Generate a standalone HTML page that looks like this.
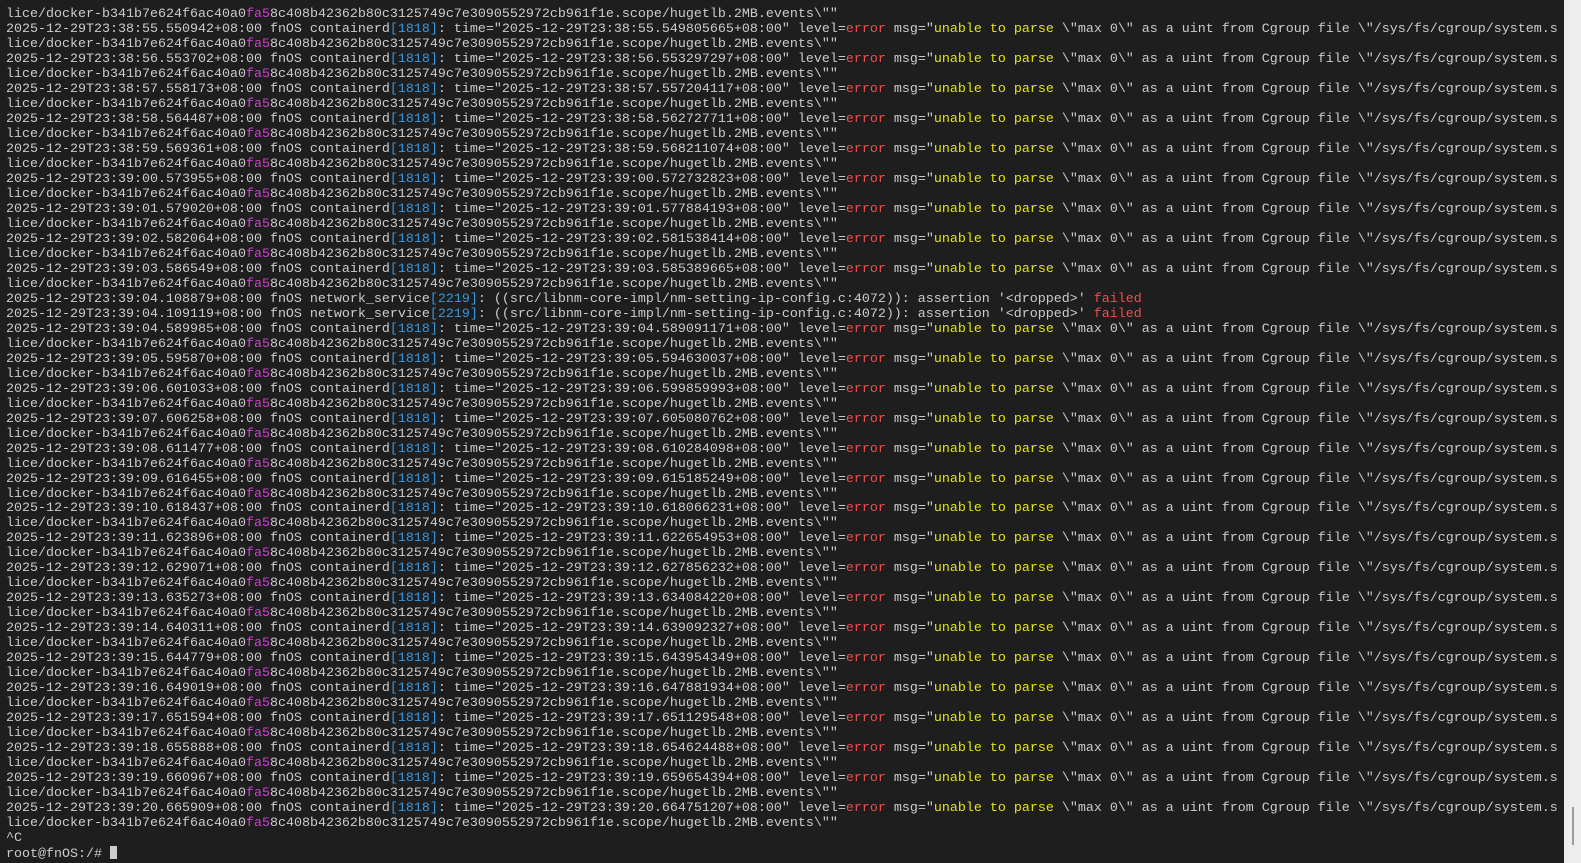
<!DOCTYPE html>
<html><head><meta charset="utf-8"><style>
html,body{margin:0;padding:0;width:1581px;height:863px;overflow:hidden;background:#1e1e1e}
#t{position:absolute;left:6px;top:7px;font-family:"Liberation Mono","DejaVu Sans Mono",monospace;font-size:13.34px;line-height:14.98px;color:#cccccc;white-space:pre}
.c{color:#3a96dd}.m{color:#d43cd4}.r{color:#f14c4c}.y{color:#e5e510}
#sb{position:absolute;left:1564px;top:0;width:17px;height:863px;background:#eeeeee}
#th{position:absolute;left:1572px;top:807px;width:2px;height:38px;background:#9a9a9a}
.cur{display:inline-block;width:7px;height:13px;background:#cccccc;vertical-align:-2px}
</style></head><body>
<div id="t">lice/docker-b341b7e624f6ac40a0<span class=m>fa5</span>8c408b42362b80c3125749c7e3090552972cb961f1e.scope/hugetlb.2MB.events\""
2025-12-29T23:38:55.550942+08:00 fnOS containerd<span class=c>[1818]</span>: time="2025-12-29T23:38:55.549805665+08:00" level=<span class=r>error</span> msg="<span class=y>unable to parse</span> \"max 0\" as a uint from Cgroup file \"/sys/fs/cgroup/system.s
lice/docker-b341b7e624f6ac40a0<span class=m>fa5</span>8c408b42362b80c3125749c7e3090552972cb961f1e.scope/hugetlb.2MB.events\""
2025-12-29T23:38:56.553702+08:00 fnOS containerd<span class=c>[1818]</span>: time="2025-12-29T23:38:56.553297297+08:00" level=<span class=r>error</span> msg="<span class=y>unable to parse</span> \"max 0\" as a uint from Cgroup file \"/sys/fs/cgroup/system.s
lice/docker-b341b7e624f6ac40a0<span class=m>fa5</span>8c408b42362b80c3125749c7e3090552972cb961f1e.scope/hugetlb.2MB.events\""
2025-12-29T23:38:57.558173+08:00 fnOS containerd<span class=c>[1818]</span>: time="2025-12-29T23:38:57.557204117+08:00" level=<span class=r>error</span> msg="<span class=y>unable to parse</span> \"max 0\" as a uint from Cgroup file \"/sys/fs/cgroup/system.s
lice/docker-b341b7e624f6ac40a0<span class=m>fa5</span>8c408b42362b80c3125749c7e3090552972cb961f1e.scope/hugetlb.2MB.events\""
2025-12-29T23:38:58.564487+08:00 fnOS containerd<span class=c>[1818]</span>: time="2025-12-29T23:38:58.562727711+08:00" level=<span class=r>error</span> msg="<span class=y>unable to parse</span> \"max 0\" as a uint from Cgroup file \"/sys/fs/cgroup/system.s
lice/docker-b341b7e624f6ac40a0<span class=m>fa5</span>8c408b42362b80c3125749c7e3090552972cb961f1e.scope/hugetlb.2MB.events\""
2025-12-29T23:38:59.569361+08:00 fnOS containerd<span class=c>[1818]</span>: time="2025-12-29T23:38:59.568211074+08:00" level=<span class=r>error</span> msg="<span class=y>unable to parse</span> \"max 0\" as a uint from Cgroup file \"/sys/fs/cgroup/system.s
lice/docker-b341b7e624f6ac40a0<span class=m>fa5</span>8c408b42362b80c3125749c7e3090552972cb961f1e.scope/hugetlb.2MB.events\""
2025-12-29T23:39:00.573955+08:00 fnOS containerd<span class=c>[1818]</span>: time="2025-12-29T23:39:00.572732823+08:00" level=<span class=r>error</span> msg="<span class=y>unable to parse</span> \"max 0\" as a uint from Cgroup file \"/sys/fs/cgroup/system.s
lice/docker-b341b7e624f6ac40a0<span class=m>fa5</span>8c408b42362b80c3125749c7e3090552972cb961f1e.scope/hugetlb.2MB.events\""
2025-12-29T23:39:01.579020+08:00 fnOS containerd<span class=c>[1818]</span>: time="2025-12-29T23:39:01.577884193+08:00" level=<span class=r>error</span> msg="<span class=y>unable to parse</span> \"max 0\" as a uint from Cgroup file \"/sys/fs/cgroup/system.s
lice/docker-b341b7e624f6ac40a0<span class=m>fa5</span>8c408b42362b80c3125749c7e3090552972cb961f1e.scope/hugetlb.2MB.events\""
2025-12-29T23:39:02.582064+08:00 fnOS containerd<span class=c>[1818]</span>: time="2025-12-29T23:39:02.581538414+08:00" level=<span class=r>error</span> msg="<span class=y>unable to parse</span> \"max 0\" as a uint from Cgroup file \"/sys/fs/cgroup/system.s
lice/docker-b341b7e624f6ac40a0<span class=m>fa5</span>8c408b42362b80c3125749c7e3090552972cb961f1e.scope/hugetlb.2MB.events\""
2025-12-29T23:39:03.586549+08:00 fnOS containerd<span class=c>[1818]</span>: time="2025-12-29T23:39:03.585389665+08:00" level=<span class=r>error</span> msg="<span class=y>unable to parse</span> \"max 0\" as a uint from Cgroup file \"/sys/fs/cgroup/system.s
lice/docker-b341b7e624f6ac40a0<span class=m>fa5</span>8c408b42362b80c3125749c7e3090552972cb961f1e.scope/hugetlb.2MB.events\""
2025-12-29T23:39:04.108879+08:00 fnOS network_service<span class=c>[2219]</span>: ((src/libnm-core-impl/nm-setting-ip-config.c:4072)): assertion '&lt;dropped&gt;' <span class=r>failed</span>
2025-12-29T23:39:04.109119+08:00 fnOS network_service<span class=c>[2219]</span>: ((src/libnm-core-impl/nm-setting-ip-config.c:4072)): assertion '&lt;dropped&gt;' <span class=r>failed</span>
2025-12-29T23:39:04.589985+08:00 fnOS containerd<span class=c>[1818]</span>: time="2025-12-29T23:39:04.589091171+08:00" level=<span class=r>error</span> msg="<span class=y>unable to parse</span> \"max 0\" as a uint from Cgroup file \"/sys/fs/cgroup/system.s
lice/docker-b341b7e624f6ac40a0<span class=m>fa5</span>8c408b42362b80c3125749c7e3090552972cb961f1e.scope/hugetlb.2MB.events\""
2025-12-29T23:39:05.595870+08:00 fnOS containerd<span class=c>[1818]</span>: time="2025-12-29T23:39:05.594630037+08:00" level=<span class=r>error</span> msg="<span class=y>unable to parse</span> \"max 0\" as a uint from Cgroup file \"/sys/fs/cgroup/system.s
lice/docker-b341b7e624f6ac40a0<span class=m>fa5</span>8c408b42362b80c3125749c7e3090552972cb961f1e.scope/hugetlb.2MB.events\""
2025-12-29T23:39:06.601033+08:00 fnOS containerd<span class=c>[1818]</span>: time="2025-12-29T23:39:06.599859993+08:00" level=<span class=r>error</span> msg="<span class=y>unable to parse</span> \"max 0\" as a uint from Cgroup file \"/sys/fs/cgroup/system.s
lice/docker-b341b7e624f6ac40a0<span class=m>fa5</span>8c408b42362b80c3125749c7e3090552972cb961f1e.scope/hugetlb.2MB.events\""
2025-12-29T23:39:07.606258+08:00 fnOS containerd<span class=c>[1818]</span>: time="2025-12-29T23:39:07.605080762+08:00" level=<span class=r>error</span> msg="<span class=y>unable to parse</span> \"max 0\" as a uint from Cgroup file \"/sys/fs/cgroup/system.s
lice/docker-b341b7e624f6ac40a0<span class=m>fa5</span>8c408b42362b80c3125749c7e3090552972cb961f1e.scope/hugetlb.2MB.events\""
2025-12-29T23:39:08.611477+08:00 fnOS containerd<span class=c>[1818]</span>: time="2025-12-29T23:39:08.610284098+08:00" level=<span class=r>error</span> msg="<span class=y>unable to parse</span> \"max 0\" as a uint from Cgroup file \"/sys/fs/cgroup/system.s
lice/docker-b341b7e624f6ac40a0<span class=m>fa5</span>8c408b42362b80c3125749c7e3090552972cb961f1e.scope/hugetlb.2MB.events\""
2025-12-29T23:39:09.616455+08:00 fnOS containerd<span class=c>[1818]</span>: time="2025-12-29T23:39:09.615185249+08:00" level=<span class=r>error</span> msg="<span class=y>unable to parse</span> \"max 0\" as a uint from Cgroup file \"/sys/fs/cgroup/system.s
lice/docker-b341b7e624f6ac40a0<span class=m>fa5</span>8c408b42362b80c3125749c7e3090552972cb961f1e.scope/hugetlb.2MB.events\""
2025-12-29T23:39:10.618437+08:00 fnOS containerd<span class=c>[1818]</span>: time="2025-12-29T23:39:10.618066231+08:00" level=<span class=r>error</span> msg="<span class=y>unable to parse</span> \"max 0\" as a uint from Cgroup file \"/sys/fs/cgroup/system.s
lice/docker-b341b7e624f6ac40a0<span class=m>fa5</span>8c408b42362b80c3125749c7e3090552972cb961f1e.scope/hugetlb.2MB.events\""
2025-12-29T23:39:11.623896+08:00 fnOS containerd<span class=c>[1818]</span>: time="2025-12-29T23:39:11.622654953+08:00" level=<span class=r>error</span> msg="<span class=y>unable to parse</span> \"max 0\" as a uint from Cgroup file \"/sys/fs/cgroup/system.s
lice/docker-b341b7e624f6ac40a0<span class=m>fa5</span>8c408b42362b80c3125749c7e3090552972cb961f1e.scope/hugetlb.2MB.events\""
2025-12-29T23:39:12.629071+08:00 fnOS containerd<span class=c>[1818]</span>: time="2025-12-29T23:39:12.627856232+08:00" level=<span class=r>error</span> msg="<span class=y>unable to parse</span> \"max 0\" as a uint from Cgroup file \"/sys/fs/cgroup/system.s
lice/docker-b341b7e624f6ac40a0<span class=m>fa5</span>8c408b42362b80c3125749c7e3090552972cb961f1e.scope/hugetlb.2MB.events\""
2025-12-29T23:39:13.635273+08:00 fnOS containerd<span class=c>[1818]</span>: time="2025-12-29T23:39:13.634084220+08:00" level=<span class=r>error</span> msg="<span class=y>unable to parse</span> \"max 0\" as a uint from Cgroup file \"/sys/fs/cgroup/system.s
lice/docker-b341b7e624f6ac40a0<span class=m>fa5</span>8c408b42362b80c3125749c7e3090552972cb961f1e.scope/hugetlb.2MB.events\""
2025-12-29T23:39:14.640311+08:00 fnOS containerd<span class=c>[1818]</span>: time="2025-12-29T23:39:14.639092327+08:00" level=<span class=r>error</span> msg="<span class=y>unable to parse</span> \"max 0\" as a uint from Cgroup file \"/sys/fs/cgroup/system.s
lice/docker-b341b7e624f6ac40a0<span class=m>fa5</span>8c408b42362b80c3125749c7e3090552972cb961f1e.scope/hugetlb.2MB.events\""
2025-12-29T23:39:15.644779+08:00 fnOS containerd<span class=c>[1818]</span>: time="2025-12-29T23:39:15.643954349+08:00" level=<span class=r>error</span> msg="<span class=y>unable to parse</span> \"max 0\" as a uint from Cgroup file \"/sys/fs/cgroup/system.s
lice/docker-b341b7e624f6ac40a0<span class=m>fa5</span>8c408b42362b80c3125749c7e3090552972cb961f1e.scope/hugetlb.2MB.events\""
2025-12-29T23:39:16.649019+08:00 fnOS containerd<span class=c>[1818]</span>: time="2025-12-29T23:39:16.647881934+08:00" level=<span class=r>error</span> msg="<span class=y>unable to parse</span> \"max 0\" as a uint from Cgroup file \"/sys/fs/cgroup/system.s
lice/docker-b341b7e624f6ac40a0<span class=m>fa5</span>8c408b42362b80c3125749c7e3090552972cb961f1e.scope/hugetlb.2MB.events\""
2025-12-29T23:39:17.651594+08:00 fnOS containerd<span class=c>[1818]</span>: time="2025-12-29T23:39:17.651129548+08:00" level=<span class=r>error</span> msg="<span class=y>unable to parse</span> \"max 0\" as a uint from Cgroup file \"/sys/fs/cgroup/system.s
lice/docker-b341b7e624f6ac40a0<span class=m>fa5</span>8c408b42362b80c3125749c7e3090552972cb961f1e.scope/hugetlb.2MB.events\""
2025-12-29T23:39:18.655888+08:00 fnOS containerd<span class=c>[1818]</span>: time="2025-12-29T23:39:18.654624488+08:00" level=<span class=r>error</span> msg="<span class=y>unable to parse</span> \"max 0\" as a uint from Cgroup file \"/sys/fs/cgroup/system.s
lice/docker-b341b7e624f6ac40a0<span class=m>fa5</span>8c408b42362b80c3125749c7e3090552972cb961f1e.scope/hugetlb.2MB.events\""
2025-12-29T23:39:19.660967+08:00 fnOS containerd<span class=c>[1818]</span>: time="2025-12-29T23:39:19.659654394+08:00" level=<span class=r>error</span> msg="<span class=y>unable to parse</span> \"max 0\" as a uint from Cgroup file \"/sys/fs/cgroup/system.s
lice/docker-b341b7e624f6ac40a0<span class=m>fa5</span>8c408b42362b80c3125749c7e3090552972cb961f1e.scope/hugetlb.2MB.events\""
2025-12-29T23:39:20.665909+08:00 fnOS containerd<span class=c>[1818]</span>: time="2025-12-29T23:39:20.664751207+08:00" level=<span class=r>error</span> msg="<span class=y>unable to parse</span> \"max 0\" as a uint from Cgroup file \"/sys/fs/cgroup/system.s
lice/docker-b341b7e624f6ac40a0<span class=m>fa5</span>8c408b42362b80c3125749c7e3090552972cb961f1e.scope/hugetlb.2MB.events\""
^C
root@fnOS:/# <span class="cur"></span></div>
<div id="sb"></div><div id="th"></div>
</body></html>
